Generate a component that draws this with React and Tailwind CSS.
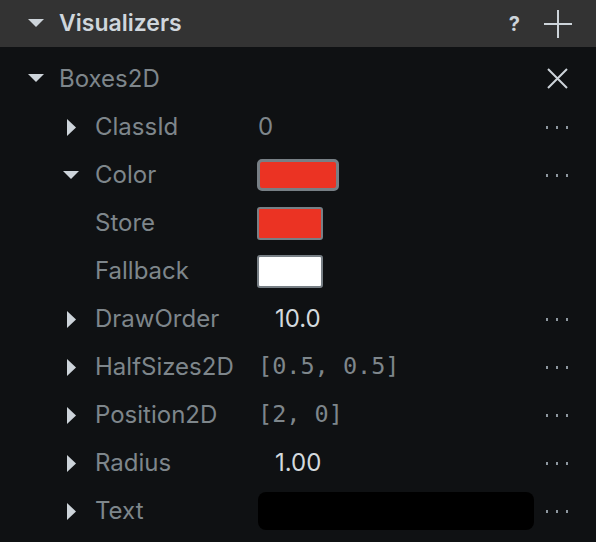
import React from "react";

const Down = ({ className = "" }) => (
  <svg width="16" height="9" viewBox="0 0 16 9" className={className}>
    <polygon points="0,0 16,0 8,8" fill="#cdd4da" />
  </svg>
);
const Right = () => (
  <svg width="9" height="17" viewBox="0 0 9 17">
    <polygon points="0,0 9,8.5 0,17" fill="#cdd4da" />
  </svg>
);
const Dots = () => (
  <div className="flex items-center gap-[8px] w-[22px]">
    <span className="w-[3px] h-[3px] bg-[#8d979f]" />
    <span className="w-[3px] h-[3px] bg-[#8d979f]" />
    <span className="w-[3px] h-[3px] bg-[#8d979f]" />
  </div>
);

function Row({ tri, label, children, dots = true }) {
  return (
    <div className="flex items-center h-[48px]">
      <div className="w-[95px] pl-[67px] flex items-center">
        {tri === "right" && <Right />}
        {tri === "down" && <div className="-ml-[4px]"><Down /></div>}
      </div>
      <div className="w-[163px] text-[#7e868b] text-[24px]">{label}</div>
      <div className="flex-1 flex items-center">{children}</div>
      <div className="w-[62px] flex items-center justify-start pl-[12px]">{dots && <Dots />}</div>
    </div>
  );
}

export default function App() {
  const mono = { fontFamily: '"DejaVu Sans Mono", monospace' };
  return (
    <div
      className="w-[596px] h-[542px] bg-[#0f1113] overflow-hidden"
      style={{ fontFamily: "Inter, 'Noto Sans', sans-serif" }}
    >
      <div className="h-[47px] bg-[#333333] flex items-center pl-[28px] pr-[24px]">
        <Down />
        <span className="ml-[15px] text-[23px] font-semibold text-[#cfd6dc] -mt-[1px]">Visualizers</span>
        <div className="flex-1" />
        <span className="text-[20px] font-bold text-[#cdd4da] mr-[24px]">?</span>
        <svg width="28" height="28" viewBox="0 0 28 28">
          <path d="M14 0V28M0 14H28" stroke="#cdd4da" strokeWidth="2" />
        </svg>
      </div>
      <div className="pt-[7px]">
        <div className="flex items-center h-[49px] pl-[28px] pr-[28px]">
          <Down />
          <span className="ml-[15px] text-[24px] text-[#7e868b]">Boxes2D</span>
          <div className="flex-1" />
          <svg width="21" height="21" viewBox="0 0 21 21">
            <path d="M1 1L20 20M20 1L1 20" stroke="#cdd4da" strokeWidth="2" />
          </svg>
        </div>
        <Row tri="right" label="ClassId">
          <span className="text-[24px] text-[#7e868b]">0</span>
        </Row>
        <Row tri="down" label="Color">
          <div className="w-[82px] h-[32px] rounded-[5px] border-[3px] border-[#777f85] bg-[#eb3323] -ml-[1px]" />
        </Row>
        <Row label="Store" dots={false}>
          <div className="w-[66px] h-[33px] rounded-[3px] border-[2px] border-[#777f85] bg-[#eb3323] -ml-[1px]" />
        </Row>
        <Row label="Fallback" dots={false}>
          <div className="w-[66px] h-[33px] rounded-[3px] border-[2px] border-[#777f85] bg-white -ml-[1px]" />
        </Row>
        <Row tri="right" label="DrawOrder">
          <span className="text-[24px] text-[#d3d9de] ml-[17px]">10.0</span>
        </Row>
        <Row tri="right" label="HalfSizes2D">
          <span className="text-[23.5px] text-[#7e868b]" style={mono}>[0.5, 0.5]</span>
        </Row>
        <Row tri="right" label="Position2D">
          <span className="text-[23.5px] text-[#7e868b]" style={mono}>[2, 0]</span>
        </Row>
        <Row tri="right" label="Radius">
          <span className="text-[24px] text-[#d3d9de] ml-[17px]">1.00</span>
        </Row>
        <Row tri="right" label="Text">
          <div className="w-[276px] h-[38px] rounded-[8px] bg-black" />
        </Row>
      </div>
    </div>
  );
}
